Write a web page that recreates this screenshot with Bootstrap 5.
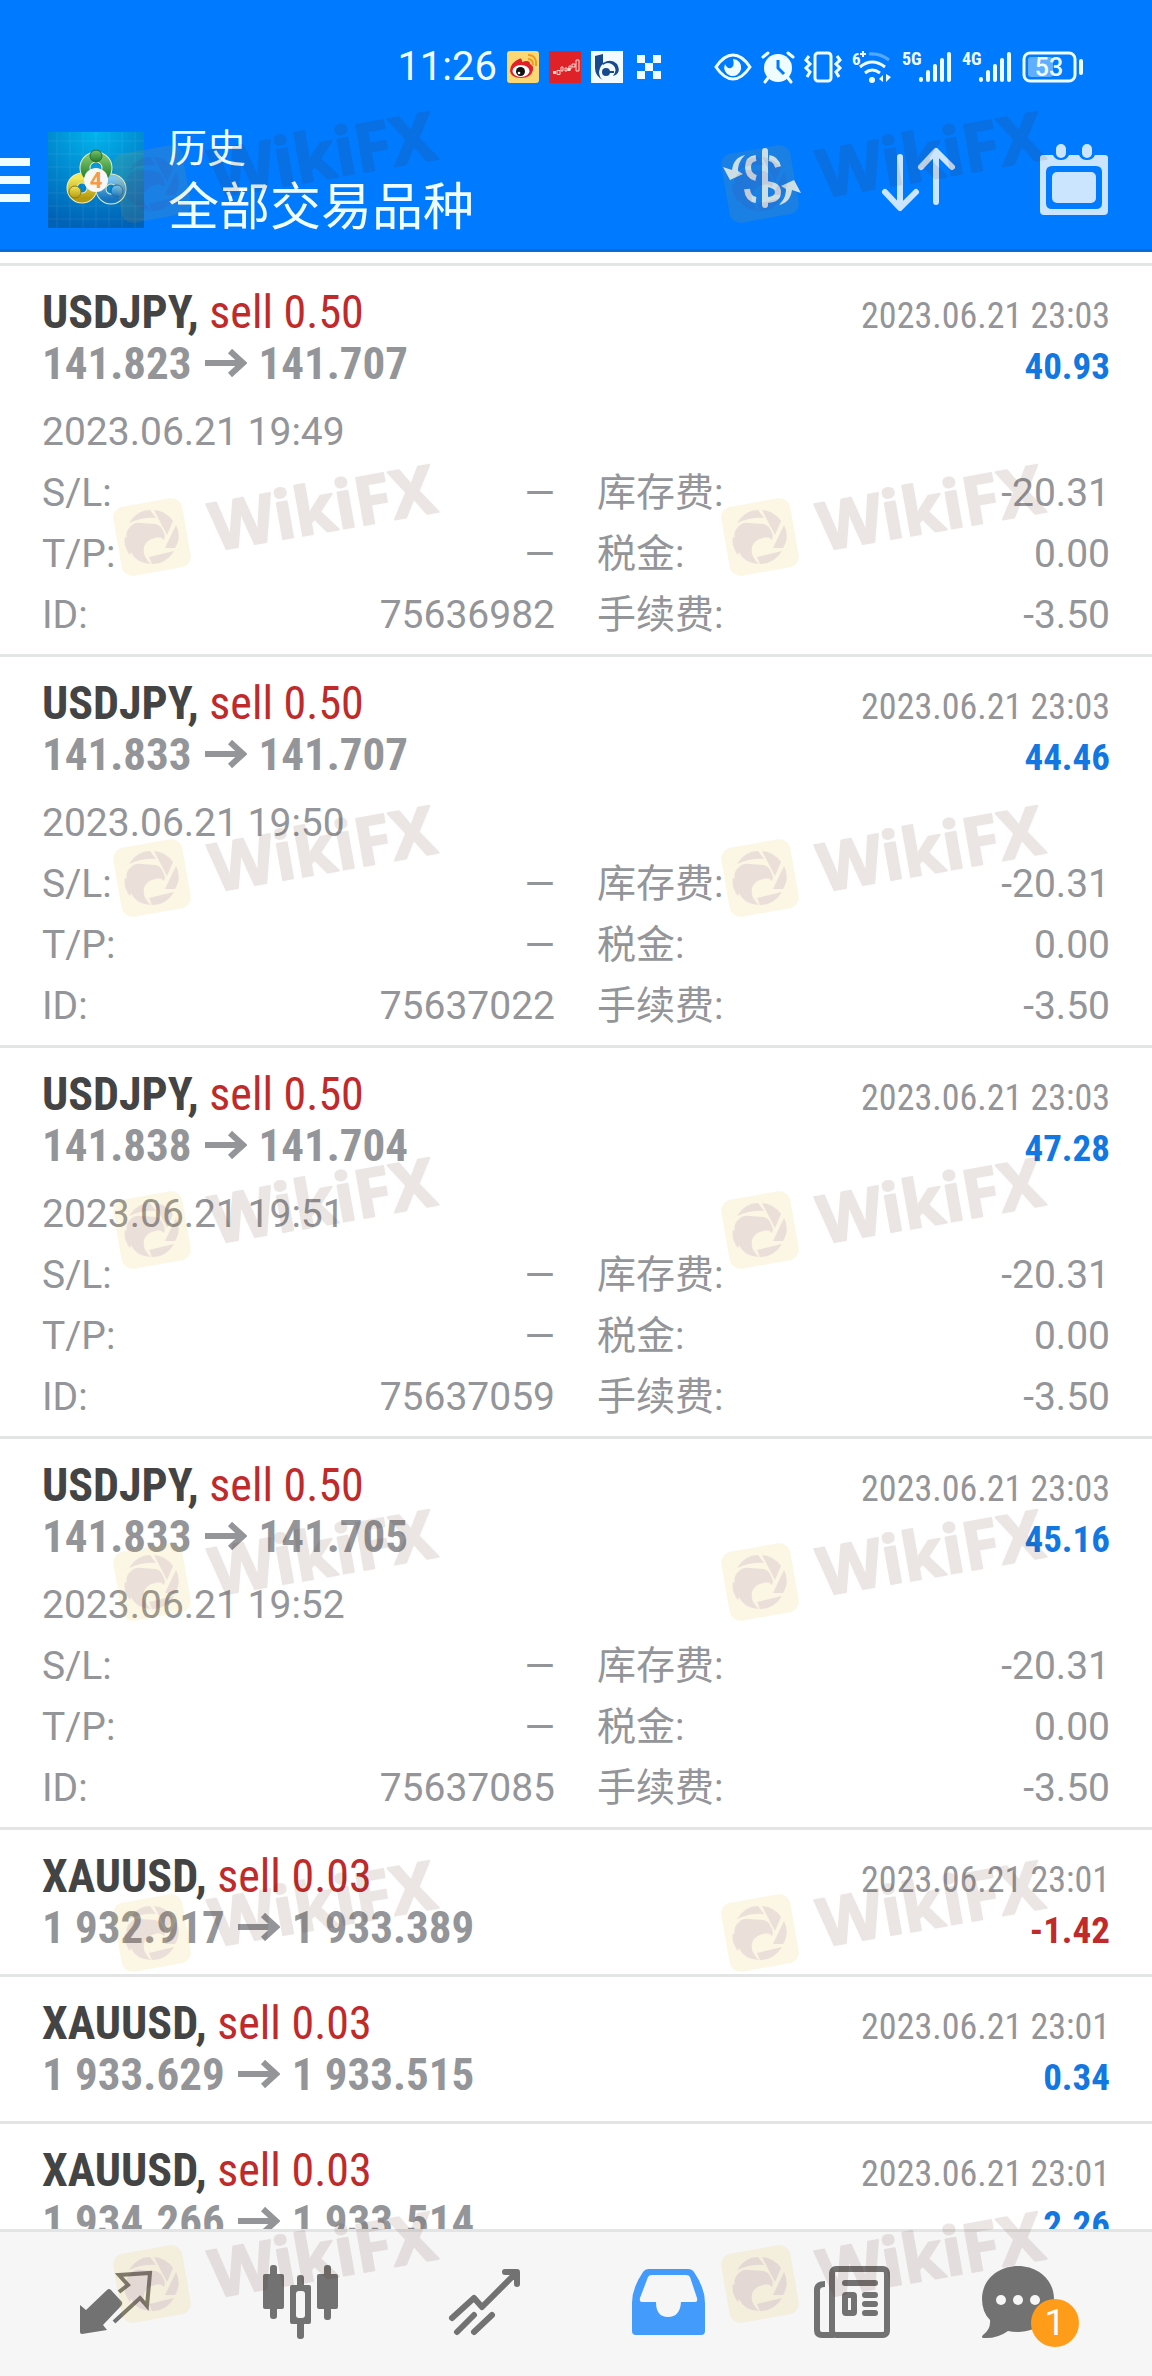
<!DOCTYPE html>
<html lang="zh-CN">
<head>
<meta charset="utf-8">
<meta name="viewport" content="width=device-width, initial-scale=1">
<title>历史 - 全部交易品种</title>
<link href="https://cdn.jsdelivr.net/npm/bootstrap@5.3.0/dist/css/bootstrap.min.css" rel="stylesheet">
<style>
  body { font-family: Roboto, "Noto Sans CJK SC", sans-serif; font-size: 39px; line-height: 61px; color: #939599; }
  svg { display: block; flex: none; overflow: visible; }
  button { border: 0; padding: 0; background: none; color: inherit; }
  .topbar { background: #007aff; border-bottom: 3px solid #0c6bd5; color: #f0fdff; }
  .status { height: 111px; padding: 43px 69px 0 0; gap: 10px; }
  .clock { font-size: 40px; line-height: 48px; }
  .status-end { gap: 10px; margin-left: 39px; }
  .titlebar { height: 138px; padding-right: 39px; }
  .burger { width: 30px; gap: 10px; }
  .burger span { height: 8px; background: #f0fdff; }
  .app-logo { margin: 0 24px 0 18px; }
  .titles { padding-top: 8px; }
  .title-small { font-size: 39px; line-height: 48px; }
  .title-big { font-size: 51px; line-height: 70px; }
  .tools { gap: 78px; color: #cbe5ff; }
  .trades { padding-top: 11px; }
  .trade { border-top: 3px solid #e3e4e4; padding: 21px 42px; }
  .trade-open { padding-bottom: 8px; }
  .head-line { font-family: "Roboto Condensed", Roboto, sans-serif; height: 51px; line-height: 51px; }
  .deal { font-size: 46px; }
  .sym { font-weight: 700; color: #444; }
  .side { font-weight: 400; color: #c02a2b; }
  .prices { font-size: 45px; font-weight: 700; }
  .prices svg { display: inline-block; margin: 0 12px 0 13px; vertical-align: 2px; }
  .when { font-size: 36px; }
  .gain, .loss { font-size: 37px; font-weight: 700; color: #1277e1; }
  .loss { color: #c02a2b; }
  .details { padding-top: 13px; }
  .cols { gap: 42px; }
  .nav-bottom { height: 147px; background: #f6f6f7; border-top: 3px solid #e3e4e4; padding: 0 24px 4px; color: #727272; }
  .chat { width: 108px; }
  .count { width: 48px; height: 48px; left: 49px; top: 33px; background: #ff9d1a; color: #fff; font-size: 37px; line-height: 48px; }
  .stamps { pointer-events: none; }
</style>
<script src="https://cdn.jsdelivr.net/npm/bootstrap@5.3.0/dist/js/bootstrap.bundle.min.js"></script>
</head>
<body>
<svg width="0" height="0" class="position-absolute" aria-hidden="true">
  <defs>
    <symbol id="arrow" viewBox="0 0 42 28"><path d="M0 14H38M25 2L38 14L25 26" fill="none" stroke="currentColor" stroke-width="6"/></symbol>
    <g id="stamp">
      <g transform="rotate(-10)">
        <rect x="-35" y="-35" width="70" height="70" rx="11" fill="#e4b014" opacity=".114"/>
        <text x="59" y="25" font-family="Noto Sans" font-weight="700" font-size="67" fill="#532616" stroke="#532616" stroke-width="2" stroke-linejoin="round" opacity=".11">WikiFX</text>
      </g>
      <g fill="#532680" opacity=".1">
        <path d="M-21-11Q-17-15-11-14L3-13Q9-12 11-6Q14-2 12 3Q9-1 3 1Q-6 3-8 10Q-10 19-1 27Q-16 26-21 15L-22 18Q-29 9-27 0L-25 1Q-27-6-21-11Z"/>
        <path d="M-23-14Q-15-27-2-27L4-19Q-10-20-23-14ZM2-27Q14-26 21-16L15-2ZM24-12Q30 0 23 11H13ZM22 14Q14 27 0 27L-3 20Z"/>
      </g>
    </g>
  </defs>
</svg>

<div class="position-relative vh-100 d-flex flex-column overflow-hidden bg-white">
  <header class="topbar flex-shrink-0">
    <div class="status d-flex align-items-start justify-content-end">
      <div class="clock">11:26</div>
      <svg class="mt-2" width="32" height="32" viewBox="0 0 32 32"><rect width="32" height="32" rx="3" fill="#fbd873"/><path d="M3 20Q3 12 12 8Q15 6 15 11Q23 8 23 13Q27 15 26 19Q24 27 14 27Q4 27 3 20Z" fill="#e0202a"/><ellipse cx="14" cy="20" rx="8.500" ry="6" fill="#fff"/><circle cx="13.500" cy="20.500" r="4.500" fill="#111"/><circle cx="12" cy="22" r="1.300" fill="#fff"/><path d="M21 8Q26 8 26 14M21 4Q30 4 29 15" fill="none" stroke="#f29a1f" stroke-width="2"/></svg>
      <svg class="mt-2" width="32" height="32" viewBox="0 0 32 32"><rect width="32" height="32" rx="1" fill="#df2128"/><path d="M4 21.500H7M20 17V20" stroke="#ffd8d0" stroke-width="3"/><path d="M8 19.500h3v4h-3zM12 16h2v4h-2zM16 17h2v3h-2zM20 15h2v3h-2zM23 13h3v3h-3zM27 9h3v11h-3z" fill="none" stroke="#ffd8d0"/></svg>
      <svg class="mt-2" width="32" height="32" viewBox="0 0 32 32"><rect width="32" height="32" fill="#f2fbff"/><path d="M4 5L12 3V13Q9 15 8 21Q8 26 12 29Q4 25 4 17ZM12 12Q20 7 26 13Q31 22 22 25Q27 18 22 14Q17 10 12 14Z" fill="#164a8c"/><circle cx="15" cy="21" r="4" fill="#164a8c"/><path d="M16 21H23" stroke="#164a8c" stroke-width="2"/></svg>
      <svg class="mt-2" width="32" height="32" viewBox="0 0 32 32" fill="currentColor"><path d="M4 4h8v8H4zM20 4h8v8h-8zM12 12h8v8h-8zM4 20h8v8H4zM20 20h8v8h-8z"/></svg>
      <div class="status-end d-flex mt-2">
        <svg width="38" height="32" viewBox="0 0 38 32"><path d="M2 16Q10 4 19 4T36 16Q28 28 19 28T2 16Z" fill="none" stroke="currentColor" stroke-width="3"/><path d="M19 8A8.500 8.500 0 1 1 11 13Q13 18 17 17Q21 15 19 8Z" fill="currentColor"/></svg>
        <svg width="32" height="32" viewBox="0 0 32 32"><circle cx="16" cy="17" r="14" fill="currentColor"/><path d="M1 6L6 2M31 6L26 2M6 27L3 31M26 27L29 31" stroke="currentColor" stroke-width="3" stroke-linecap="round"/><path d="M16 9V17L22 23" fill="none" stroke="#007aff" stroke-width="3"/></svg>
        <svg width="38" height="32" viewBox="0 0 38 32" fill="none" stroke="currentColor" stroke-width="3"><rect x="11" y="2" width="16" height="28" rx="3"/><path d="M5 5L2 9L6 13L2 17L6 21L3 26M33 5L36 9L32 13L36 17L32 21L35 26"/></svg>
        <svg width="40" height="32" viewBox="0 0 40 32" fill="none" stroke="currentColor" stroke-width="3"><text x="0" y="14" font-size="17" font-weight="700" font-family="Roboto Condensed" fill="currentColor" stroke="none">6</text><path d="M8 3H14M11 0V6" stroke-width="2"/><path d="M17 3Q28 2 37 9" opacity=".35"/><path d="M8 16Q20 6 33 16M13 22Q20 16 28 22"/><circle cx="20" cy="29" r="3" fill="currentColor" stroke="none"/><path d="M27 28L31 24V31ZM39 26L34 23V31Z" fill="currentColor" stroke="none"/></svg>
        <svg width="50" height="32" viewBox="0 0 50 32" stroke="currentColor" stroke-width="4" stroke-linecap="round"><text x="0" y="14" font-size="18" font-weight="700" font-family="Roboto Condensed" fill="currentColor" stroke="none">5G</text><path d="M19 28V29M26 21V29M33 15V29M40 9V29M47 3V29"/></svg>
        <svg width="50" height="32" viewBox="0 0 50 32" stroke="currentColor" stroke-width="4" stroke-linecap="round"><text x="0" y="14" font-size="18" font-weight="700" font-family="Roboto Condensed" fill="currentColor" stroke="none">4G</text><path d="M19 28V29M26 21V29M33 15V29M40 9V29M47 3V29"/></svg>
        <svg width="61" height="32" viewBox="0 0 61 32"><rect x="2" y="2" width="51" height="28" rx="6" fill="none" stroke="currentColor" stroke-width="3"/><rect x="6" y="6" width="25" height="20" rx="3" fill="currentColor" opacity=".4"/><rect x="57" y="8" width="4" height="16" rx="2" fill="currentColor"/><text x="27" y="25" text-anchor="middle" font-size="25" font-weight="500" font-family="Roboto" fill="currentColor">53</text></svg>
      </div>
    </div>
    <div class="titlebar d-flex align-items-center">
      <button class="burger d-flex flex-column" aria-label="菜单"><span></span><span></span><span></span></button>
      <svg class="app-logo" width="96" height="96" viewBox="0 0 96 96" role="img" aria-label="MetaTrader 4">
        <defs>
          <radialGradient id="sky" cx=".5" cy="0" r="1"><stop offset="0" stop-color="#00b4ec"/><stop offset="1" stop-color="#0062b6"/></radialGradient>
          <linearGradient id="gr" x2="0" y2="1"><stop offset="0" stop-color="#7cc46a"/><stop offset="1" stop-color="#1d7a2c"/></linearGradient>
          <linearGradient id="ye" x2="0" y2="1"><stop offset="0" stop-color="#f2e85a"/><stop offset="1" stop-color="#b59a10"/></linearGradient>
          <linearGradient id="bl" x2="0" y2="1"><stop offset="0" stop-color="#7cc4ee"/><stop offset="1" stop-color="#1673bd"/></linearGradient>
        </defs>
        <rect width="96" height="96" fill="url(#sky)"/>
        <path d="M9 0V96M22 0V96M35 0V96M48 0V96M61 0V96M74 0V96M87 0V96M0 9H96M0 22H96M0 35H96M0 48H96M0 61H96M0 74H96M0 87H96" stroke="#fff" opacity=".08"/>
        <g fill="none" stroke="#e4eec4" stroke-width="11">
          <circle cx="48" cy="36" r="11"/><circle cx="34" cy="56" r="10"/><circle cx="63" cy="57" r="10"/>
        </g>
        <g fill="none" stroke-width="9">
          <circle cx="63" cy="57" r="10" stroke="url(#bl)"/><circle cx="34" cy="56" r="10" stroke="url(#ye)"/><circle cx="48" cy="36" r="11" stroke="url(#gr)"/>
        </g>
        <circle cx="48" cy="24" r="6" fill="url(#gr)" stroke="#2c6b2f"/><circle cx="27" cy="60" r="6" fill="url(#ye)" stroke="#8c7a18"/><circle cx="69" cy="59" r="6" fill="url(#bl)" stroke="#1e69a5"/>
        <circle cx="48" cy="48" r="12" fill="#f7f7f5"/>
        <text x="48" y="56" text-anchor="middle" font-family="Roboto" font-weight="700" font-size="22" fill="#f39a4c">4</text>
      </svg>
      <div class="titles flex-grow-1">
        <div class="title-small">历史</div>
        <h1 class="title-big m-0 fw-normal">全部交易品种</h1>
      </div>
      <div class="tools d-flex">
        <button aria-label="币种"><svg width="78" height="72" viewBox="0 -4 78 72" fill="none" stroke="currentColor" stroke-width="6"><path d="M42 3V57" stroke-linecap="round"/><path d="M33 10Q25 11 25 19Q25 28 33 30M46 10Q53 11 55 19M24 41Q25 51 33 52M43 36Q55 37 55 44Q55 52 43 52"/><g fill="currentColor" stroke="none"><path id="sw" d="M22 7C13 9 10 15 9 22L0 19L7 32L20 26L15 23C15 17 17 12 22 7Z"/><use href="#sw" transform="rotate(180 39 32)"/></g></svg></button>
        <button aria-label="排序"><svg width="78" height="72" viewBox="-2 -4 78 72" fill="none" stroke="currentColor" stroke-width="6" stroke-linecap="round" stroke-linejoin="round"><path d="M19 9V59M4 44L19 60L35 44M55 54V4M40 19L55 3L71 19"/></svg></button>
        <button aria-label="日期"><svg width="78" height="72" viewBox="-5 0 78 72"><path fill="currentColor" fill-rule="evenodd" d="M3 11H13Q15 16 21 16T29 11H39Q41 16 47 16T55 11H65Q68 11 68 14V67Q68 71 64 71H4Q0 71 0 67V14Q0 11 3 11ZM12 22Q6 22 6 28V59Q6 65 12 65H56Q62 65 62 59V28Q62 22 56 22Z"/><rect x="12" y="28" width="44" height="31" rx="5" fill="currentColor"/><rect x="16" y="0" width="10" height="14" rx="5" fill="currentColor"/><rect x="42" y="0" width="10" height="14" rx="5" fill="currentColor"/></svg></button>
      </div>
    </div>
  </header>

  <main class="trades flex-grow-1 overflow-hidden">
    <article class="trade trade-open">
      <div class="head-line d-flex justify-content-between align-items-baseline"><div class="deal"><span class="sym">USDJPY,</span> <span class="side">sell 0.50</span></div><div class="when">2023.06.21 23:03</div></div>
      <div class="head-line d-flex justify-content-between align-items-baseline"><div class="prices">141.823<svg width="42" height="28"><use href="#arrow"/></svg>141.707</div><div class="gain">40.93</div></div>
      <div class="details">
        <div>2023.06.21 19:49</div>
        <div class="d-flex cols"><div class="w-50 d-flex justify-content-between"><span>S/L:</span><span>—</span></div><div class="w-50 d-flex justify-content-between"><span>库存费:</span><span>-20.31</span></div></div>
        <div class="d-flex cols"><div class="w-50 d-flex justify-content-between"><span>T/P:</span><span>—</span></div><div class="w-50 d-flex justify-content-between"><span>税金:</span><span>0.00</span></div></div>
        <div class="d-flex cols"><div class="w-50 d-flex justify-content-between"><span>ID:</span><span>75636982</span></div><div class="w-50 d-flex justify-content-between"><span>手续费:</span><span>-3.50</span></div></div>
      </div>
    </article>
    <article class="trade trade-open">
      <div class="head-line d-flex justify-content-between align-items-baseline"><div class="deal"><span class="sym">USDJPY,</span> <span class="side">sell 0.50</span></div><div class="when">2023.06.21 23:03</div></div>
      <div class="head-line d-flex justify-content-between align-items-baseline"><div class="prices">141.833<svg width="42" height="28"><use href="#arrow"/></svg>141.707</div><div class="gain">44.46</div></div>
      <div class="details">
        <div>2023.06.21 19:50</div>
        <div class="d-flex cols"><div class="w-50 d-flex justify-content-between"><span>S/L:</span><span>—</span></div><div class="w-50 d-flex justify-content-between"><span>库存费:</span><span>-20.31</span></div></div>
        <div class="d-flex cols"><div class="w-50 d-flex justify-content-between"><span>T/P:</span><span>—</span></div><div class="w-50 d-flex justify-content-between"><span>税金:</span><span>0.00</span></div></div>
        <div class="d-flex cols"><div class="w-50 d-flex justify-content-between"><span>ID:</span><span>75637022</span></div><div class="w-50 d-flex justify-content-between"><span>手续费:</span><span>-3.50</span></div></div>
      </div>
    </article>
    <article class="trade trade-open">
      <div class="head-line d-flex justify-content-between align-items-baseline"><div class="deal"><span class="sym">USDJPY,</span> <span class="side">sell 0.50</span></div><div class="when">2023.06.21 23:03</div></div>
      <div class="head-line d-flex justify-content-between align-items-baseline"><div class="prices">141.838<svg width="42" height="28"><use href="#arrow"/></svg>141.704</div><div class="gain">47.28</div></div>
      <div class="details">
        <div>2023.06.21 19:51</div>
        <div class="d-flex cols"><div class="w-50 d-flex justify-content-between"><span>S/L:</span><span>—</span></div><div class="w-50 d-flex justify-content-between"><span>库存费:</span><span>-20.31</span></div></div>
        <div class="d-flex cols"><div class="w-50 d-flex justify-content-between"><span>T/P:</span><span>—</span></div><div class="w-50 d-flex justify-content-between"><span>税金:</span><span>0.00</span></div></div>
        <div class="d-flex cols"><div class="w-50 d-flex justify-content-between"><span>ID:</span><span>75637059</span></div><div class="w-50 d-flex justify-content-between"><span>手续费:</span><span>-3.50</span></div></div>
      </div>
    </article>
    <article class="trade trade-open">
      <div class="head-line d-flex justify-content-between align-items-baseline"><div class="deal"><span class="sym">USDJPY,</span> <span class="side">sell 0.50</span></div><div class="when">2023.06.21 23:03</div></div>
      <div class="head-line d-flex justify-content-between align-items-baseline"><div class="prices">141.833<svg width="42" height="28"><use href="#arrow"/></svg>141.705</div><div class="gain">45.16</div></div>
      <div class="details">
        <div>2023.06.21 19:52</div>
        <div class="d-flex cols"><div class="w-50 d-flex justify-content-between"><span>S/L:</span><span>—</span></div><div class="w-50 d-flex justify-content-between"><span>库存费:</span><span>-20.31</span></div></div>
        <div class="d-flex cols"><div class="w-50 d-flex justify-content-between"><span>T/P:</span><span>—</span></div><div class="w-50 d-flex justify-content-between"><span>税金:</span><span>0.00</span></div></div>
        <div class="d-flex cols"><div class="w-50 d-flex justify-content-between"><span>ID:</span><span>75637085</span></div><div class="w-50 d-flex justify-content-between"><span>手续费:</span><span>-3.50</span></div></div>
      </div>
    </article>
    <article class="trade">
      <div class="head-line d-flex justify-content-between align-items-baseline"><div class="deal"><span class="sym">XAUUSD,</span> <span class="side">sell 0.03</span></div><div class="when">2023.06.21 23:01</div></div>
      <div class="head-line d-flex justify-content-between align-items-baseline"><div class="prices">1 932.917<svg width="42" height="28"><use href="#arrow"/></svg>1 933.389</div><div class="loss">-1.42</div></div>
    </article>
    <article class="trade">
      <div class="head-line d-flex justify-content-between align-items-baseline"><div class="deal"><span class="sym">XAUUSD,</span> <span class="side">sell 0.03</span></div><div class="when">2023.06.21 23:01</div></div>
      <div class="head-line d-flex justify-content-between align-items-baseline"><div class="prices">1 933.629<svg width="42" height="28"><use href="#arrow"/></svg>1 933.515</div><div class="gain">0.34</div></div>
    </article>
    <article class="trade">
      <div class="head-line d-flex justify-content-between align-items-baseline"><div class="deal"><span class="sym">XAUUSD,</span> <span class="side">sell 0.03</span></div><div class="when">2023.06.21 23:01</div></div>
      <div class="head-line d-flex justify-content-between align-items-baseline"><div class="prices">1 934.266<svg width="42" height="28"><use href="#arrow"/></svg>1 933.514</div><div class="gain">2.26</div></div>
    </article>
  </main>

  <nav class="nav-bottom d-flex flex-shrink-0">
    <button class="flex-fill w-100 d-flex align-items-center justify-content-center" aria-label="行情"><svg width="72" height="63" viewBox="0 0 72 63"><path d="M0 34L6 39L27 19Q29 17 31 19L42 31Q43 33 41 35L23 54L27 59L2 63Q0 63 0 61Z" fill="currentColor"/><path d="M34 51L60 27L67 35L70 2L39 4L48 14L39 21" fill="none" stroke="currentColor" stroke-width="4"/></svg></button>
    <button class="flex-fill w-100 d-flex align-items-center justify-content-center" aria-label="图表"><svg width="75" height="74" viewBox="0 0 75 74"><g fill="currentColor"><rect y="9" width="21" height="35" rx="2"/><rect x="7" width="7" height="54" rx="3"/><rect x="54" y="9" width="21" height="35" rx="2"/><rect x="61" width="7" height="55" rx="3"/><rect x="27" y="20" width="21" height="39" rx="2"/><rect x="34" y="10" width="7" height="64" rx="3"/></g><rect x="33" y="26" width="9" height="27" rx="3" fill="#f6f6f7"/></svg></button>
    <button class="flex-fill w-100 d-flex align-items-center justify-content-center" aria-label="交易"><svg width="71" height="66" viewBox="0 0 71 66" fill="none" stroke="currentColor" stroke-width="6" stroke-linecap="round" stroke-linejoin="round"><path d="M3 49L25 29L33 38L67 4M56 3H68V15M8 63L25 46M25 63L43 46"/></svg></button>
    <button class="flex-fill w-100 d-flex align-items-center justify-content-center" aria-label="历史"><svg width="73" height="66" viewBox="0 0 73 66"><path fill="#439bfb" fill-rule="evenodd" d="M17 0H56Q60 0 62 3Q73 19 73 34V62Q73 66 69 66H4Q0 66 0 62V34Q0 19 11 3Q13 0 17 0ZM20 6Q17 6 16 8L8 29Q7 33 10 33H24Q24 48 36 48T49 33H63Q66 33 65 29L58 8Q57 6 54 6Z"/></svg></button>
    <button class="flex-fill w-100 d-flex align-items-center justify-content-center" aria-label="新闻"><svg width="76" height="72" viewBox="0 0 76 72" fill="none" stroke="currentColor" stroke-width="6"><rect x="18" y="3" width="55" height="66" rx="4"/><path d="M11 18Q3 18 3 24V64Q3 69 8 69H20"/><rect x="31" y="29" width="9" height="18" rx="1"/><path d="M31 17H61M51 29H61M51 38H61M51 47H61" stroke-linecap="round"/></svg></button>
    <button class="flex-fill w-100 d-flex align-items-center justify-content-center" aria-label="消息"><span class="chat position-relative"><svg width="72" height="72" viewBox="0 0 72 72"><path d="M36 0C56 0 72 14 72 33S56 66 36 66Q30 66 26 65Q15 73 1 72Q-1 71 1 69Q9 63 8 54Q0 46 0 33C0 14 16 0 36 0Z" fill="currentColor"/><g fill="#f6f6f7"><circle cx="19" cy="34" r="5"/><circle cx="36" cy="34" r="5"/><circle cx="53" cy="34" r="5"/></g></svg><span class="count position-absolute rounded-circle text-center">1</span></span></button>
  </nav>

  <svg class="stamps position-absolute top-0 start-0 w-100 h-100" aria-hidden="true">
    <g id="stampcol">
      <use href="#stamp" x="152" y="184"/><use href="#stamp" x="152" y="537"/><use href="#stamp" x="152" y="878"/><use href="#stamp" x="152" y="1230"/><use href="#stamp" x="152" y="1582"/><use href="#stamp" x="152" y="1933"/><use href="#stamp" x="152" y="2284"/>
    </g>
    <use href="#stampcol" x="608"/>
  </svg>
</div>
</body>
</html>
